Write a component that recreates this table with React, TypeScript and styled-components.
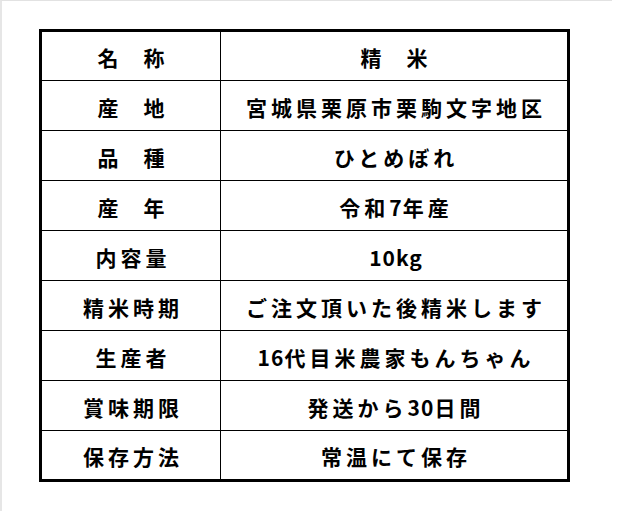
import styled, { createGlobalStyle } from "styled-components";

const rows: [string, string][] = [
    ["名　称", "精　米"],
    ["産　地", "宮城県栗原市栗駒文字地区"],
    ["品　種", "ひとめぼれ"],
    ["産　年", "令和7年産"],
    ["内容量", "10kg"],
    ["精米時期", "ご注文頂いた後精米します"],
    ["生産者", "16代目米農家もんちゃん"],
    ["賞味期限", "発送から30日間"],
    ["保存方法", "常温にて保存"],
];

const GlobalStyle = createGlobalStyle`
    html, body {
        margin: 0;
        background: #fff;
    }
`

const Page = styled.div`
    width: 612px;
    height: 511px;
    box-sizing: border-box;
    border-top: 1px solid #e2e2e2;
    border-left: 2px solid #e6e6e6;
    padding: 28px 0 0 37px;
`

const Table = styled.table`
    width: 531px;
    border-collapse: collapse;
    border: 3px solid #000;
    font-family: "Noto Sans CJK JP", "Noto Sans", sans-serif;
    font-weight: 700;
    font-size: 21px;
    color: #000;
`

const Row = styled.tr`
    height: 50px;
`

const Cell = styled.td<{ $label?: boolean }>`
    border: 1.5px solid #000;
    padding: 3px 0 0 4px;
    text-align: center;
    vertical-align: middle;
    letter-spacing: 4px;
    line-height: 1;
    width: ${p => p.$label ? "174px" : "auto"};
`

const Latin = styled.span`
    letter-spacing: 1px;
`

const Gap = styled.span`
    letter-spacing: 0;
`

const renderText = (s: string) =>
    s.split(/([0-9a-z]+|　)/).map((part, i) => {
        if (part === "　") return <Gap key={i}>{part}</Gap>
        if (/^[0-9a-z]+$/.test(part)) return <Latin key={i}>{part}</Latin>
        return part
    })

const App = () => {
    return (<>
        <GlobalStyle />
        <Page>
            <Table>
                <tbody>
                    {rows.map(([k, v]) => (
                        <Row key={k}>
                            <Cell $label>{renderText(k)}</Cell>
                            <Cell>{renderText(v)}</Cell>
                        </Row>
                    ))}
                </tbody>
            </Table>
        </Page>
    </>)
}

export default App
